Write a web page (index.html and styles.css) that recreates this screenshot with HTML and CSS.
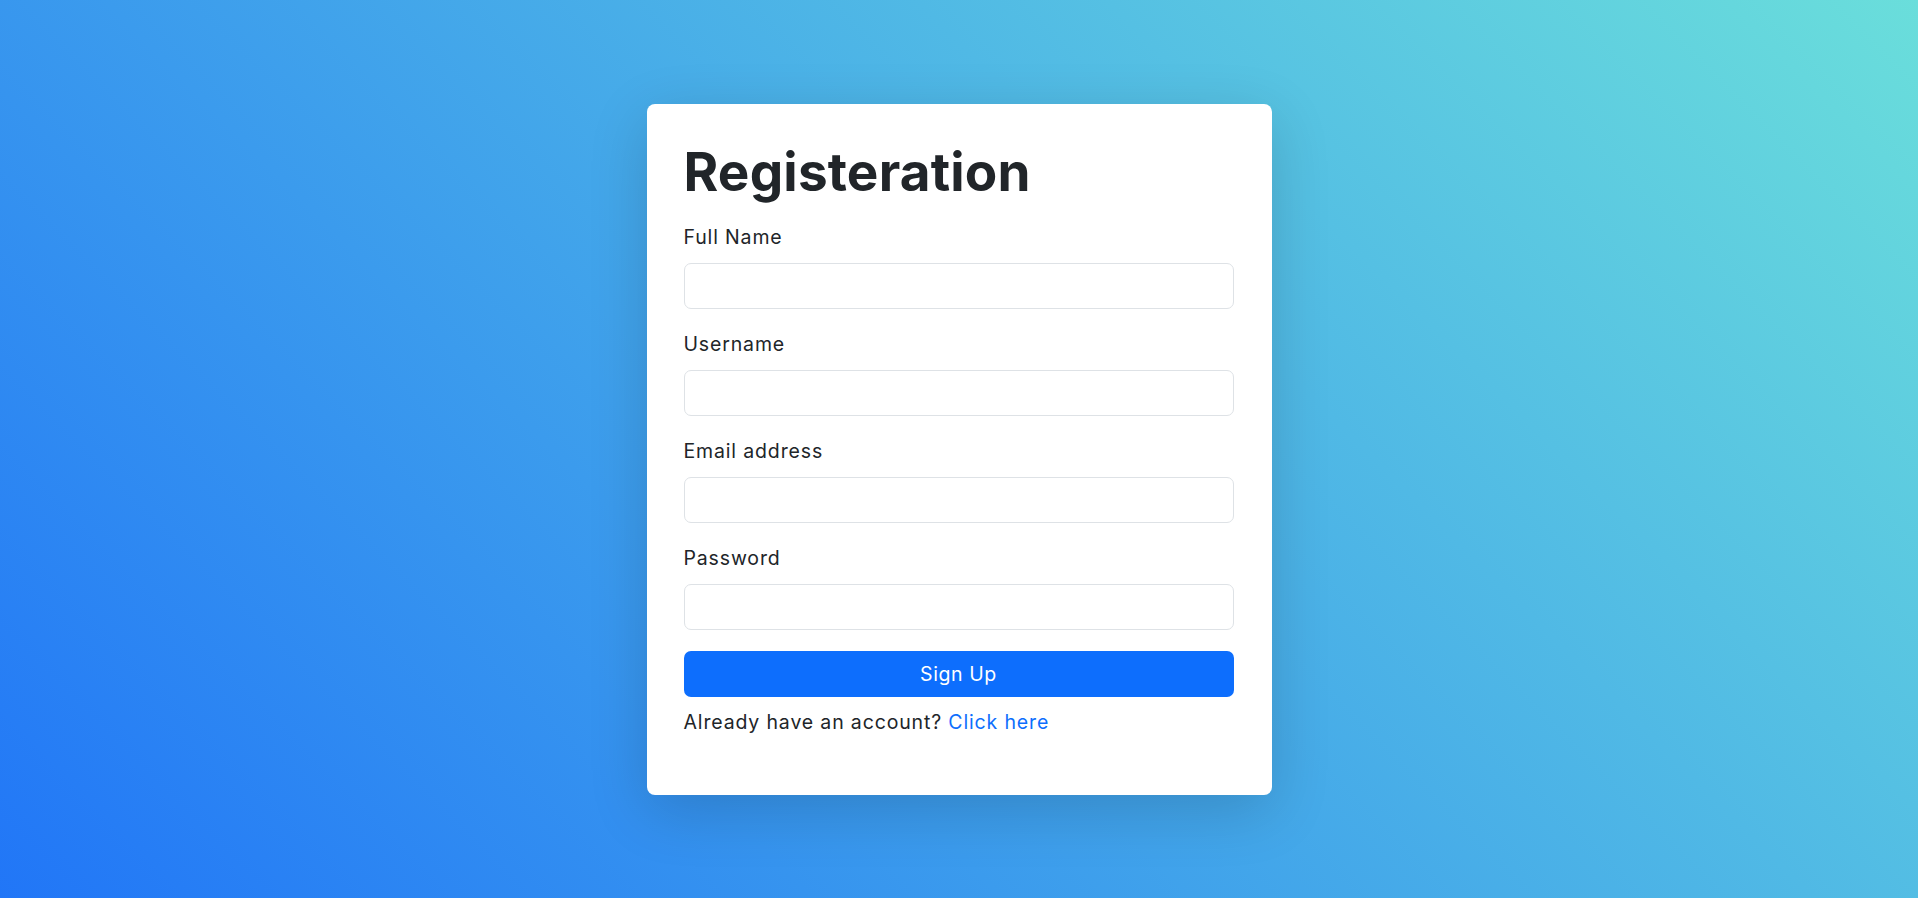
FILE: index.html
```html
<!DOCTYPE html>
<html lang="en">
<head>
<meta charset="utf-8">
<title>Registeration</title>
<link rel="stylesheet" href="styles.css">
</head>
<body>
<main class="page">
  <form class="card">
    <h1 class="title">Registeration</h1>
    <div class="field">
      <label class="label" for="fullname">Full Name</label>
      <input class="input" id="fullname" type="text">
    </div>
    <div class="field">
      <label class="label" for="username">Username</label>
      <input class="input" id="username" type="text">
    </div>
    <div class="field">
      <label class="label" for="email">Email address</label>
      <input class="input" id="email" type="email">
    </div>
    <div class="field">
      <label class="label" for="password">Password</label>
      <input class="input" id="password" type="password">
    </div>
    <button class="btn" type="button">Sign Up</button>
    <p class="note">Already have an account? <a class="link" href="#">Click here</a></p>
  </form>
</main>
</body>
</html>
```

FILE: styles.css
```css
* { box-sizing: border-box; }
html, body { margin: 0; padding: 0; }
body {
  font-family: "Inter", "Noto Sans", sans-serif;
  color: #212529;
  background: linear-gradient(45deg, #2176f7 0%, #6adedb 100%);
  min-height: 100vh;
}
.page {
  min-height: 100vh;
  display: flex;
  align-items: center;
  justify-content: center;
}
.card {
  width: 625px;
  background: #fff;
  border-radius: 8px;
  padding: 31px 38px 58px 37px;
  box-shadow: 0 16px 60px rgba(0, 0, 0, 0.16);
}
.title {
  margin: 0 0 14px;
  font-size: 53px;
  font-weight: 700;
  line-height: 74px;
  color: #212529;
  letter-spacing: 0.2px;
}
.field { margin-bottom: 21px; }
.label {
  display: block;
  font-size: 19.5px;
  line-height: 29px;
  letter-spacing: 0.85px;
  margin-bottom: 11px;
}
.input {
  display: block;
  width: 100%;
  height: 46px;
  border: 1px solid #dee2e6;
  border-radius: 7px;
  background: #fff;
  font: inherit;
}
.btn {
  display: block;
  width: 100%;
  height: 46px;
  border: 0;
  border-radius: 7px;
  background: #0d6efd;
  color: #fff;
  font-family: inherit;
  font-size: 19.5px;
  letter-spacing: 0.6px;
}
.note {
  margin: 11px 0 0;
  font-size: 19.5px;
  line-height: 29px;
  letter-spacing: 0.85px;
}
.link { color: #0d6efd; text-decoration: none; }
```
